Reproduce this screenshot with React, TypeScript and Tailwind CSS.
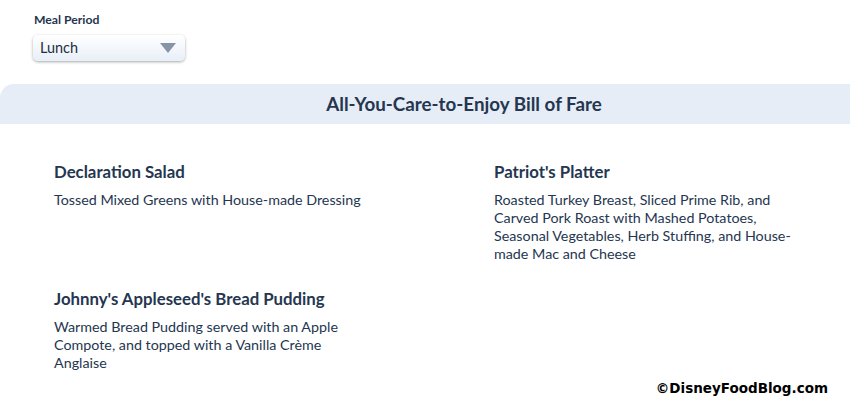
// Bill of Fare menu card

interface MenuItem {
  name: string;
  description: string;
}

const items: MenuItem[] = [
  { name: 'Declaration Salad', description: 'Tossed Mixed Greens with House-made Dressing' },
  {
    name: "Patriot's Platter",
    description:
      'Roasted Turkey Breast, Sliced Prime Rib, and Carved Pork Roast with Mashed Potatoes, Seasonal Vegetables, Herb Stuffing, and House-made Mac and Cheese',
  },
  {
    name: "Johnny's Appleseed's Bread Pudding",
    description: 'Warmed Bread Pudding served with an Apple Compote, and topped with a Vanilla Crème Anglaise',
  },
];

function MenuEntry({ name, description }: MenuItem) {
  return (
    <div className="w-[312px]">
      <h3 className="text-[16.8px] font-bold leading-5 text-[#253650]">{name}</h3>
      <p className="mt-[9px] text-[14.3px] leading-[18px] text-[#253650]">{description}</p>
    </div>
  );
}

export default function App() {
  return (
    <div className="relative h-[415px] w-[850px] bg-white font-['Lato',sans-serif]">
      {/* Selecteur */}
      <div className="px-[34px] pt-[12px]">
        <div className="text-[12.2px] font-bold leading-4 text-[#253650]">Meal Period</div>
        <div className="mt-[7px] flex h-[26px] w-[152px] -translate-x-px items-center justify-between rounded-[5px] bg-gradient-to-b from-white to-[#e8eff8] pl-[7px] pr-[9px] shadow-[0_1px_3px_rgba(0,0,0,0.35)]">
          <span className="text-[14.4px] text-[#1f2d42]">Lunch</span>
          <svg width="16" height="10" viewBox="0 0 16 10">
            <path d="M0 0 L16 0 L8 10 Z" fill="#8793a6" />
          </svg>
        </div>
      </div>

      {/* Bandeau */}
      <div className="mt-[23px] flex h-[40px] items-center justify-center rounded-tl-[14px] bg-[#e6edf6]">
        <h2 className="pl-[78px] text-[18.8px] font-bold text-[#253650]">All-You-Care-to-Enjoy Bill of Fare</h2>
      </div>

      {/* Plats */}
      <div className="grid grid-cols-[440px_1fr] gap-y-[26px] pl-[54px] pt-[38px]">
        {items.map((item) => (
          <MenuEntry key={item.name} {...item} />
        ))}
      </div>

      <div className="absolute right-[22px] bottom-[17px] font-['DejaVu_Sans',sans-serif] text-[13.5px] font-bold text-black">
        ©DisneyFoodBlog.com
      </div>
    </div>
  );
}
